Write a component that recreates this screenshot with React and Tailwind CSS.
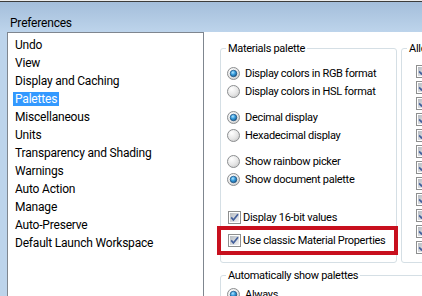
import React, { useId } from 'react';

const CATEGORIES = [
    'Undo', 'View', 'Display and Caching', 'Palettes', 'Miscellaneous', 'Units',
    'Transparency and Shading', 'Warnings', 'Auto Action', 'Manage', 'Auto-Preserve',
    'Default Launch Workspace',
];

// Windows 7 style radio button
const Radio = ({ checked }) => {
    const id = useId();
    return (
        <svg width="13" height="13" viewBox="0 0 13 13" className="shrink-0">
            <defs>
                <radialGradient id={id + 'bg'} cx="0.35" cy="0.3" r="0.8">
                    <stop offset="0" stopColor="#ffffff" />
                    <stop offset="0.6" stopColor="#e6e6e6" />
                    <stop offset="1" stopColor="#c9c9c9" />
                </radialGradient>
                <radialGradient id={id + 'dot'} cx="0.4" cy="0.35" r="0.7">
                    <stop offset="0" stopColor="#b6e6ff" />
                    <stop offset="0.45" stopColor="#3aa0e0" />
                    <stop offset="1" stopColor="#145286" />
                </radialGradient>
            </defs>
            <circle cx="6.5" cy="6.5" r="6" fill={`url(#${id}bg)`} stroke="#8c8e90" />
            {checked && <circle cx="6.5" cy="6.5" r="3.3" fill={`url(#${id}dot)`} stroke="#1a4f7e" strokeWidth="0.7" />}
        </svg>
    );
};

// Windows 7 style checkbox (always checked here)
const Check = () => {
    const id = useId();
    return (
        <svg width="13" height="13" viewBox="0 0 13 13" className="shrink-0">
            <defs>
                <linearGradient id={id} x1="0" y1="0" x2="1" y2="1">
                    <stop offset="0" stopColor="#b5bac0" />
                    <stop offset="1" stopColor="#f4f4f5" />
                </linearGradient>
            </defs>
            <rect x="0.5" y="0.5" width="12" height="12" fill="#fff" stroke="#8e8f8f" />
            <rect x="2" y="2" width="9" height="9" fill={`url(#${id})`} />
            <path d="M3.2 6.4 L5.4 9 L10 3.2" fill="none" stroke="#44609c" strokeWidth="1.7" />
        </svg>
    );
};

const RadioRow = ({ checked, label, className }) => (
    <div className={'h-[18px] flex items-center gap-[3px] pl-[1px] ' + (className || '')}>
        <Radio checked={checked} />
        <span className="pl-[2px] pt-[2px]">{label}</span>
    </div>
);

const CheckRow = ({ label, className }) => (
    <div className={'h-[18px] flex items-center gap-[2px] pl-[2px] ' + (className || '')}>
        <Check />
        <span className="pt-[2px]">{label}</span>
    </div>
);

export default function App() {
    return (
        <div className="w-[422px] h-[296px] overflow-hidden flex flex-col bg-white text-black text-[11px] tracking-[-0.3px] font-[Roboto,sans-serif]">
            {/* window edge */}
            <div className="h-[1px] bg-[#ececec]" />
            <div className="h-[1px] bg-[#3c3c3c]" />

            {/* Title bar */}
            <div className="h-[30px] bg-gradient-to-b from-[#a4bedb] to-[#bdd4eb] pl-[10px] pt-[13px] text-[12px] leading-[16px] tracking-[-0.2px]">
                Preferences
            </div>

            <div className="flex flex-1 min-h-0">
                <div className="w-[7px] shrink-0 bg-[#bdd4eb]" />

                {/* Category list */}
                <div className="w-[197px] shrink-0 border border-b-0 border-[#7f868f] bg-white pt-[3px] pl-[5px] text-[12px] tracking-[-0.2px]">
                    {CATEGORIES.map((c) => (
                        <div key={c} className="h-[18px] flex items-center">
                            <span className={c === 'Palettes'
                                ? 'px-[2px] leading-[14px] bg-[#3399ff] text-white'
                                : 'px-[2px] leading-[14px]'}
                            >
                                {c}
                            </span>
                        </div>
                    ))}
                </div>

                {/* Settings */}
                <div className="flex-1 min-w-0 pl-[16px] pt-[9px]">
                    <div className="flex gap-[4px]">
                        <fieldset className="w-[177px] shrink-0 border border-[#d5dfe5] rounded-[3px] pl-[5px] pr-[5px] pb-[7px]">
                            <legend className="px-[2px] leading-[15px]">Materials palette</legend>
                            <RadioRow checked label="Display colors in RGB format" className="mt-[8px]" />
                            <RadioRow label="Display colors in HSL format" />
                            <RadioRow checked label="Decimal display" className="mt-[8px]" />
                            <RadioRow label="Hexadecimal display" />
                            <RadioRow label="Show rainbow picker" className="mt-[8px]" />
                            <RadioRow checked label="Show document palette" />
                            <CheckRow label="Display 16-bit values" className="mt-[20px]" />
                            <div className="-ml-[9px] -mr-[7px] border-4 border-[#c8101e] h-[29px] flex items-center pl-[5px]">
                                <CheckRow label="Use classic Material Properties" />
                            </div>
                        </fieldset>

                        <fieldset className="w-[80px] shrink-0 border border-[#d5dfe5] rounded-[3px] pl-[5px] pb-[6px]">
                            <legend className="px-[2px] leading-[15px] whitespace-nowrap">Allow palettes</legend>
                            <div className="mt-[7px] pl-[9px]">
                                {Array.from({ length: 12 }).map((_, i) => (
                                    <div key={i} className="h-[16px] flex items-center">
                                        <Check />
                                    </div>
                                ))}
                            </div>
                        </fieldset>
                    </div>

                    <fieldset className="w-[240px] mt-[5px] border border-[#d5dfe5] rounded-[3px] pl-[5px] pb-[6px]">
                        <legend className="px-[2px] leading-[15px]">Automatically show palettes</legend>
                        <RadioRow checked label="Always" className="mt-[2px]" />
                        <RadioRow label="Never" />
                    </fieldset>
                </div>
            </div>
        </div>
    );
}
